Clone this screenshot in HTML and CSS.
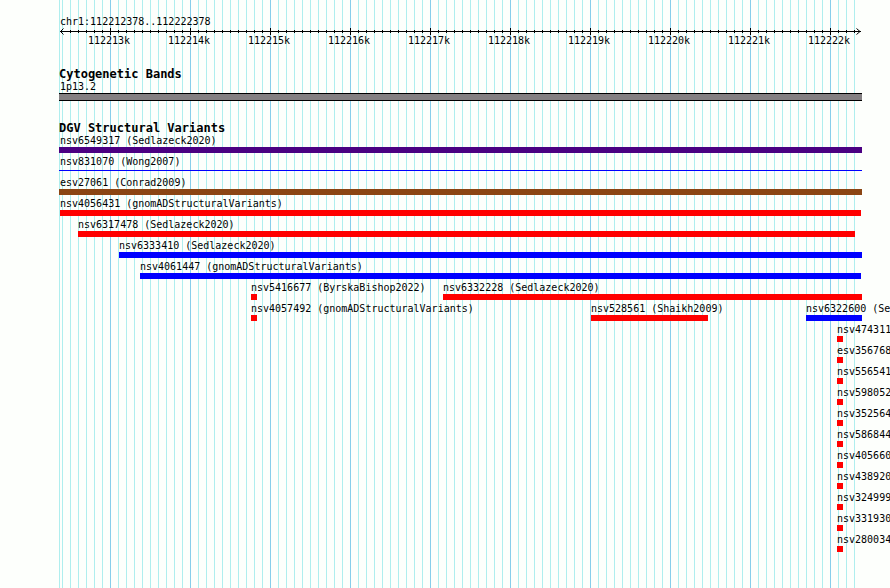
FILE: index.html
```html
<!DOCTYPE html>
<html lang="en">
<head>
<meta charset="utf-8">
<title>chr1:112212378..112222378</title>
<link rel="stylesheet" href="styles.css">
</head>
<body>
<main class="panel">
  <svg class="gridlines" id="gridlines" aria-hidden="true"></svg>

  <header class="ruler">
    <div class="label">chr1:112212378..112222378</div>
    <svg class="axis" id="axis" aria-hidden="true"></svg>
    <div class="ticks">
      <span>112213k</span><span>112214k</span><span>112215k</span><span>112216k</span><span>112217k</span><span>112218k</span><span>112219k</span><span>112220k</span><span>112221k</span><span>112222k</span>
    </div>
  </header>

  <section class="track cytobands">
    <h2>Cytogenetic Bands</h2>
    <div class="label">1p13.2</div>
    <div class="band"></div>
  </section>

  <section class="track variants">
    <h2>DGV Structural Variants</h2>
    <div class="row"><div class="feature edge mixed" style="--from:0;--len:803"><span class="label">nsv6549317 (Sedlazeck2020)</span></div></div>
    <div class="row"><div class="feature edge thin" style="--from:0;--len:803"><span class="label">nsv831070 (Wong2007)</span></div></div>
    <div class="row"><div class="feature edge complex" style="--from:0;--len:803"><span class="label">esv27061 (Conrad2009)</span></div></div>
    <div class="row"><div class="feature loss" style="--from:1;--len:801"><span class="label">nsv4056431 (gnomADStructuralVariants)</span></div></div>
    <div class="row"><div class="feature loss" style="--from:19;--len:777"><span class="label">nsv6317478 (Sedlazeck2020)</span></div></div>
    <div class="row"><div class="feature gain" style="--from:60;--len:743"><span class="label">nsv6333410 (Sedlazeck2020)</span></div></div>
    <div class="row"><div class="feature gain" style="--from:81;--len:721"><span class="label">nsv4061447 (gnomADStructuralVariants)</span></div></div>
    <div class="row">
      <div class="feature loss" style="--from:192;--len:6"><span class="label">nsv5416677 (ByrskaBishop2022)</span></div>
      <div class="feature loss" style="--from:384;--len:419"><span class="label">nsv6332228 (Sedlazeck2020)</span></div>
    </div>
    <div class="row">
      <div class="feature loss" style="--from:192;--len:6"><span class="label">nsv4057492 (gnomADStructuralVariants)</span></div>
      <div class="feature loss" style="--from:532;--len:117"><span class="label">nsv528561 (Shaikh2009)</span></div>
      <div class="feature gain" style="--from:747;--len:56"><span class="label">nsv6322600 (Sedlazeck2020)</span></div>
    </div>
    <div class="row"><div class="feature loss" style="--from:778;--len:6"><span class="label">nsv474311</span></div></div>
    <div class="row"><div class="feature loss" style="--from:778;--len:6"><span class="label">esv356768</span></div></div>
    <div class="row"><div class="feature loss" style="--from:778;--len:6"><span class="label">nsv556541</span></div></div>
    <div class="row"><div class="feature loss" style="--from:778;--len:6"><span class="label">nsv598052</span></div></div>
    <div class="row"><div class="feature loss" style="--from:778;--len:6"><span class="label">nsv352564</span></div></div>
    <div class="row"><div class="feature loss" style="--from:778;--len:6"><span class="label">nsv586844</span></div></div>
    <div class="row"><div class="feature loss" style="--from:778;--len:6"><span class="label">nsv405660</span></div></div>
    <div class="row"><div class="feature loss" style="--from:778;--len:6"><span class="label">nsv438920</span></div></div>
    <div class="row"><div class="feature loss" style="--from:778;--len:6"><span class="label">nsv324999</span></div></div>
    <div class="row"><div class="feature loss" style="--from:778;--len:6"><span class="label">nsv331930</span></div></div>
    <div class="row"><div class="feature loss" style="--from:778;--len:6"><span class="label">nsv280034</span></div></div>
  </section>
</main>
<script src="script.js"></script>
</body>
</html>
```

FILE: styles.css
```css
* { box-sizing: border-box; }

html { overflow: hidden; background: #fdfffc; }

body {
  margin: 0;
  color: #000;
  font: 10px/12px "DejaVu Sans Mono", "Liberation Mono", monospace;
}

/* --from and --len are in units of 1/803 of the panel width */
.panel {
  position: relative;
  min-height: 100vh;
  margin: 0 28px 0 59px;
  padding-top: 16px;
}

.gridlines {
  position: absolute;
  inset: 0;
  z-index: -1;
  width: 100%;
  height: 100%;
}

.gridlines .minor { fill: #afeeee; }
.gridlines .major { fill: #87ceeb; }

h2 {
  margin: 0;
  font-size: 12px;
  line-height: 13px;
  font-weight: bold;
}

.label {
  display: block;
  white-space: nowrap;
}

.ruler > .label,
.cytobands > .label,
.edge > .label { padding-left: 1px; }

.axis {
  display: block;
  width: 100%;
  height: 7px;
  overflow: visible;
}

.axis path { fill: none; stroke: #000; }

.ticks {
  display: flex;
  margin-left: calc(10 / 803 * 100%);
}

.ticks span {
  flex: 0 0 calc(80 / 793 * 100%);
  text-align: center;
}

.track { padding-top: 21px; }

.band {
  height: 8px;
  background: #848082;
  border: solid #000;
  border-width: 1px 0;
}

.row {
  display: grid;
  grid-template-columns: 100%;
  margin-bottom: 3px;
}

.feature {
  grid-area: 1 / 1;
  width: calc(var(--len) / 803 * 100%);
  margin-left: calc(var(--from) / 803 * 100%);
}

.feature::after {
  content: "";
  display: block;
  height: 6px;
  background: var(--color);
}

.loss { --color: #ff0000; }
.gain { --color: #0000ff; }
.mixed { --color: #4b0082; }
.complex { --color: #8b4513; }
.thin { --color: linear-gradient(#0000ff, #0000ff) 0 2px / 100% 1px no-repeat; }
```

FILE: script.js
```js
const NS = "http://www.w3.org/2000/svg";
const UNITS = 803;
const grid = document.getElementById("gridlines");
const axis = document.getElementById("axis");

function rect(parent, x, y, width, height, cls) {
  const r = document.createElementNS(NS, "rect");
  r.setAttribute("x", (x / UNITS * 100) + "%");
  r.setAttribute("y", y);
  r.setAttribute("width", width);
  r.setAttribute("height", height);
  r.setAttribute("shape-rendering", "crispEdges");
  if (cls) r.setAttribute("class", cls);
  parent.appendChild(r);
}

function arrow(x, d) {
  const s = document.createElementNS(NS, "svg");
  s.setAttribute("x", x);
  s.setAttribute("overflow", "visible");
  const p = document.createElementNS(NS, "path");
  p.setAttribute("d", d);
  s.appendChild(p);
  axis.appendChild(s);
}

rect(grid, 0, 0, 1, "100%", "minor");
rect(axis, 1, 3, "99.7%", 1);
for (let i = 0; i < 100; i++) {
  const x = 3 + i * 8;
  const major = i % 10 === 6;
  rect(grid, x, 0, 1, "100%", major ? "major" : "minor");
  if (i > 0) rect(axis, x, major ? 0 : 2, 1, major ? 7 : 3);
}
arrow("0", "M4.5 0.5L1.5 3.5L4.5 6.5");
arrow("100%", "M-5.5 0.5L-2 3.5L-5.5 6.5");
```
